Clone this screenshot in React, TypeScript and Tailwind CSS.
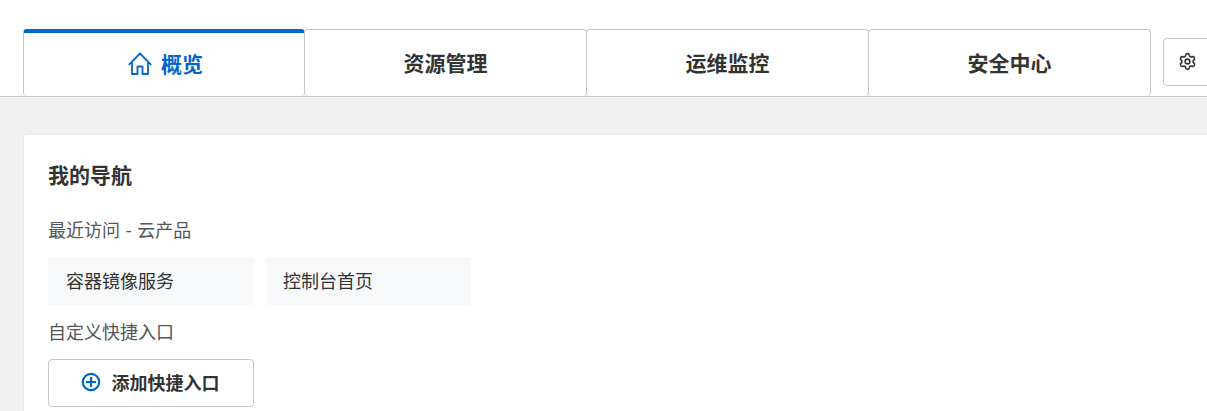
import { Settings } from "lucide-react";

const font = "[font-family:'Noto_Sans_CJK_SC','Noto_Sans',sans-serif]";

function HomeIcon() {
  return (
    <svg className="size-[24px]" viewBox="0 0 24 24" fill="none" aria-hidden="true">
      <path d="M0.800 12.800 12 1.500l11.200 11.300M4 10.500V22h5.500v-7.500h5V22H20V10.500" stroke="currentColor" strokeWidth="1.800" strokeLinejoin="round" />
    </svg>
  );
}

function PlusCircle() {
  return (
    <svg className="size-[20px] text-[#0066cc]" viewBox="0 0 20 20" fill="none" aria-hidden="true">
      <circle cx="10" cy="10" r="8.200" stroke="currentColor" strokeWidth="2.200" />
      <path d="M10 5v10M5 10h10" stroke="currentColor" strokeWidth="2.200" />
    </svg>
  );
}

function Tab({ label }: { label: string }) {
  return (
    <div className="-ml-px flex h-[67px] w-[283px] shrink-0 items-center justify-center rounded-[4px] border border-b-0 border-[#c2c6cf] bg-white text-[21px] font-bold text-[#333333]">
      {label}
    </div>
  );
}

export default function App() {
  return (
    <div className={`${font} h-[411px] w-[1207px] overflow-hidden bg-[#f0f0f1] text-[#333333]`}>
      <header className="flex h-[97px] items-end border-b border-[#c2c6cf] bg-white pl-[23px]">
        <div className="flex h-[67px] w-[282px] shrink-0 items-center justify-center gap-[9px] rounded-[4px] border-x border-[#c2c6cf] border-t-4 border-t-[#0066cc] bg-white pb-px pl-[3px] text-[21px] font-bold text-[#0066cc]">
          <HomeIcon />
          概览
        </div>
        <Tab label="资源管理" />
        <Tab label="运维监控" />
        <Tab label="安全中心" />
        <button className="mb-[10px] ml-3 flex h-[48px] w-[70px] shrink-0 items-center rounded-l-[4px] border border-[#c2c6cf] bg-white pb-[2px] pl-[14px] text-[#333333]">
          <Settings size={19} strokeWidth={2} />
        </button>
      </header>
      <main className="pl-[23px] pt-[37px]">
        <section className="w-[1300px] rounded-[4px] border border-[#e8e9ec] bg-white px-6 pb-6">
          <h2 className="mt-[23px] text-[21px] leading-[32px] font-bold">我的导航</h2>
          <p className="mt-[27px] text-[18px] leading-[24px] text-[#555555] [word-spacing:1.5px]">最近访问 - 云产品</p>
          <div className="mt-[16px] flex gap-3">
            <div className="flex h-[48px] w-[206px] items-center rounded-[2px] bg-[#f7f8fa] pb-[2px] pl-[18px] text-[18px]">容器镜像服务</div>
            <div className="flex h-[48px] w-[205px] items-center rounded-[2px] bg-[#f7f8fa] pb-[2px] pl-[17px] text-[18px]">控制台首页</div>
          </div>
          <p className="mt-[14px] text-[18px] leading-[24px] text-[#555555]">自定义快捷入口</p>
          <button className="mt-[16px] flex h-[48px] w-[206px] items-center justify-center gap-[11px] rounded-[4px] border border-[#c2c6cf] bg-white pr-[2px] pb-[2px] text-[18px] font-bold">
            <PlusCircle />
            添加快捷入口
          </button>
        </section>
      </main>
    </div>
  );
}
